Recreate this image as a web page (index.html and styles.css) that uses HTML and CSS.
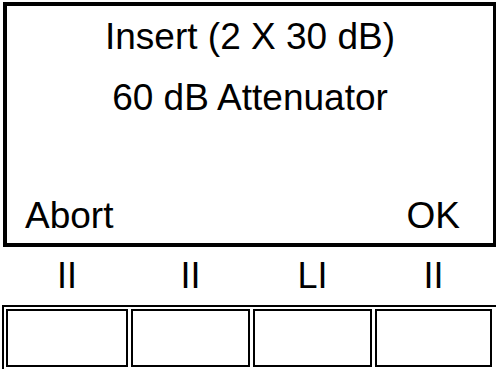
FILE: index.html
```html
<!DOCTYPE html>
<html>
<head>
<meta charset="utf-8">
<link rel="stylesheet" href="styles.css">
</head>
<body>
<div class="screen">
  <div class="line">Insert (2 X 30 dB)</div>
  <div class="line">60 dB Attenuator</div>
  <div class="spacer"></div>
  <div class="actions">
    <span>Abort</span>
    <span>OK</span>
  </div>
</div>
<div class="labels">
  <span>II</span>
  <span>II</span>
  <span>LI</span>
  <span>II</span>
</div>
<div class="keys">
  <div class="key"></div>
  <div class="key"></div>
  <div class="key"></div>
  <div class="key"></div>
</div>
</body>
</html>
```
FILE: styles.css
```css
html, body {
  margin: 0;
  padding: 0;
  background: #fff;
  overflow: hidden;
  width: 496px;
  height: 369px;
}
body {
  font-family: "Liberation Sans", Arial, sans-serif;
  color: #000;
}
.screen {
  box-sizing: border-box;
  margin: 2px 0 0 3px;
  width: 493px;
  height: 245px;
  border: 4px solid #000;
  border-right-width: 3px;
  display: flex;
  flex-direction: column;
  font-size: 37px;
}
.line {
  text-align: center;
  line-height: 61px;
  height: 61px;
}
.spacer {
  flex: 1;
}
.actions {
  display: flex;
  justify-content: space-between;
  line-height: 42px;
  padding: 0 33px 6px 18px;
}
.labels {
  display: grid;
  grid-template-columns: 122px 119px 119px 117px;
  column-gap: 3px;
  padding-left: 6px;
  font-size: 36px;
  line-height: 58px;
  height: 58px;
  text-align: center;
}
.keys {
  margin-left: 2px;
  border-top: 2px solid #000;
  border-left: 2px solid #000;
  padding: 2px 0 0 2px;
  height: 60px;
  display: grid;
  grid-template-columns: 122px 119px 119px 117px;
  grid-template-rows: 58px;
  column-gap: 3px;
}
.key {
  box-sizing: border-box;
  border: 2px solid #000;
  background: #fff;
}
```
